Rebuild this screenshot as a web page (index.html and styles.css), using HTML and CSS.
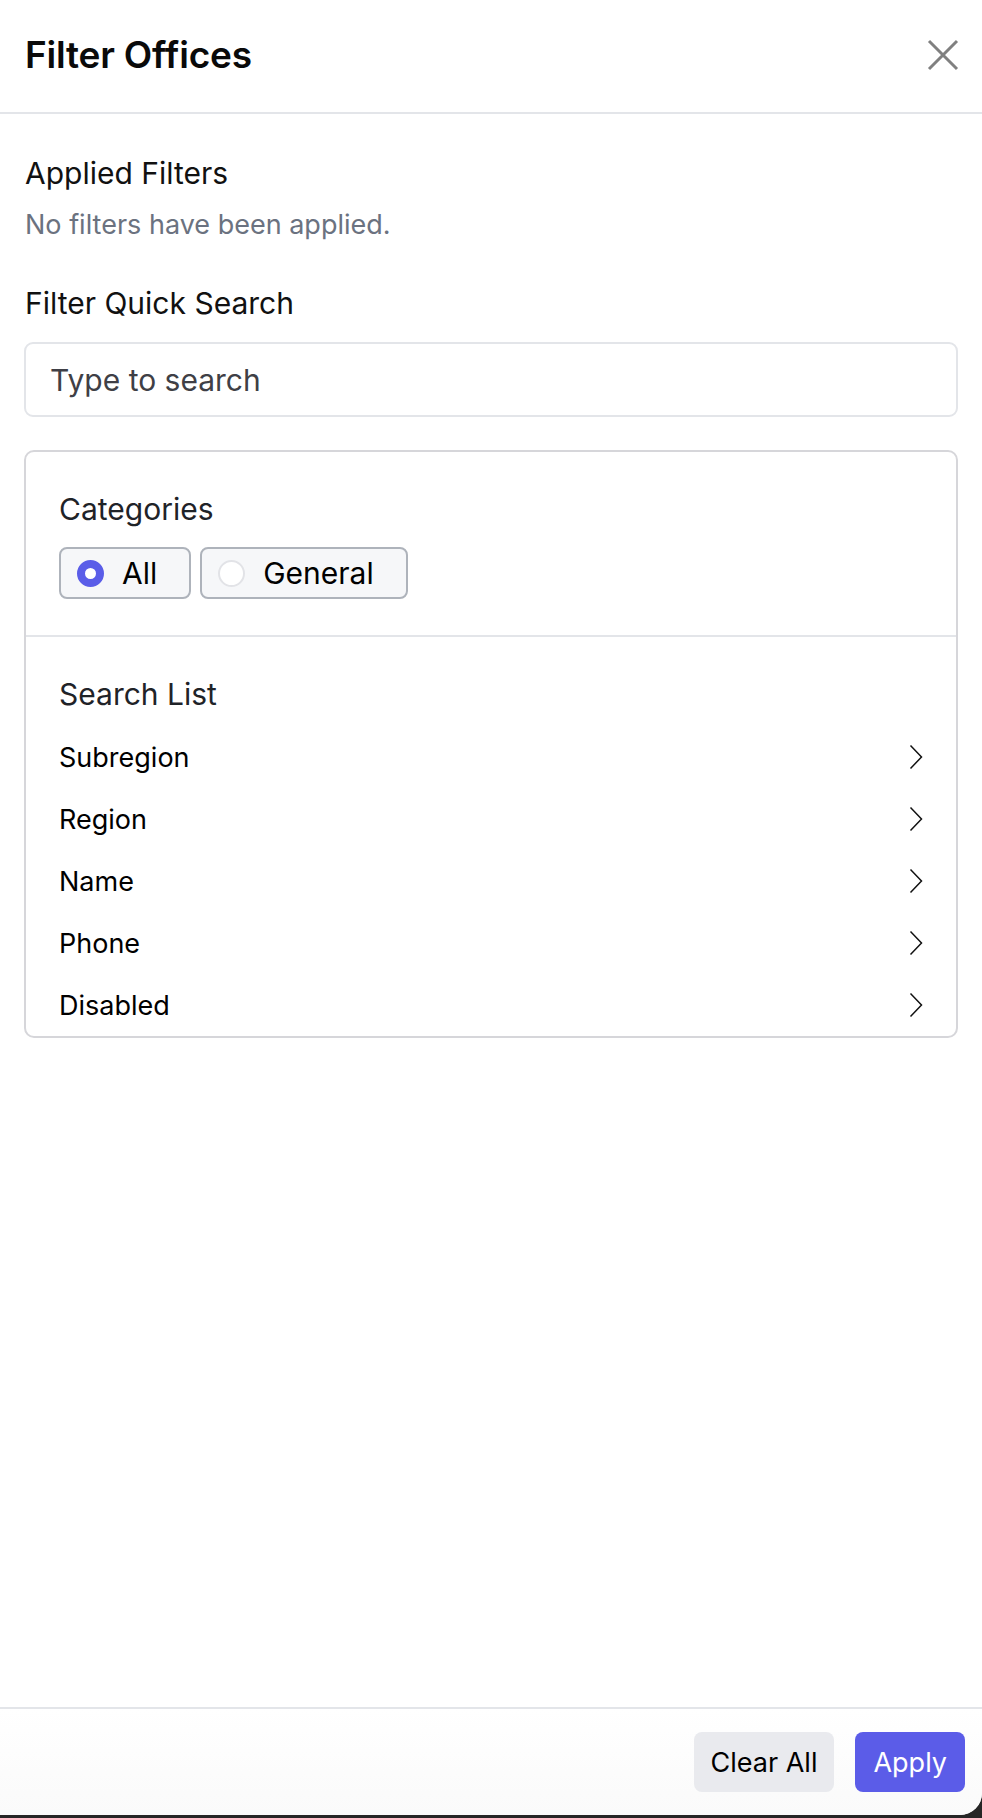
FILE: index.html
```html
<!DOCTYPE html>
<html lang="en">
<head>
<meta charset="utf-8">
<title>Filter Offices</title>
<link rel="stylesheet" href="styles.css">
</head>
<body>
<div class="panel">
  <header class="hdr">
    <h1 class="title">Filter Offices</h1>
    <button class="close" aria-label="Close">
      <svg width="32" height="32" viewBox="0 0 32 32"><path d="M2 2 L30 30 M30 2 L2 30" stroke="#808080" stroke-width="3" fill="none"/></svg>
    </button>
  </header>
  <main class="content">
    <section class="applied">
      <h2 class="sec-title">Applied Filters</h2>
      <p class="muted">No filters have been applied.</p>
    </section>
    <section class="quick">
      <h2 class="sec-title">Filter Quick Search</h2>
      <div class="search">Type to search</div>
    </section>
    <div class="card">
      <div class="cats">
        <h3 class="card-title">Categories</h3>
        <div class="radios">
          <label class="radio"><span class="dot on"></span><span>All</span></label>
          <label class="radio"><span class="dot"></span><span>General</span></label>
        </div>
      </div>
      <div class="list">
        <h3 class="card-title">Search List</h3>
        <ul class="items">
          <li class="item"><span>Subregion</span><svg class="chev" width="16" height="26" viewBox="0 0 16 26"><path d="M2.5 1.5 L13.5 13 L2.5 24.5" stroke="#111" stroke-width="1.5" fill="none"/></svg></li>
          <li class="item"><span>Region</span><svg class="chev" width="16" height="26" viewBox="0 0 16 26"><path d="M2.5 1.5 L13.5 13 L2.5 24.5" stroke="#111" stroke-width="1.5" fill="none"/></svg></li>
          <li class="item"><span>Name</span><svg class="chev" width="16" height="26" viewBox="0 0 16 26"><path d="M2.5 1.5 L13.5 13 L2.5 24.5" stroke="#111" stroke-width="1.5" fill="none"/></svg></li>
          <li class="item"><span>Phone</span><svg class="chev" width="16" height="26" viewBox="0 0 16 26"><path d="M2.5 1.5 L13.5 13 L2.5 24.5" stroke="#111" stroke-width="1.5" fill="none"/></svg></li>
          <li class="item"><span>Disabled</span><svg class="chev" width="16" height="26" viewBox="0 0 16 26"><path d="M2.5 1.5 L13.5 13 L2.5 24.5" stroke="#111" stroke-width="1.5" fill="none"/></svg></li>
        </ul>
      </div>
    </div>
  </main>
  <footer class="ftr">
    <button class="btn btn-clear">Clear All</button>
    <button class="btn btn-apply">Apply</button>
  </footer>
</div>
</body>
</html>
```
FILE: styles.css
```css
* { box-sizing: border-box; }
html, body { margin: 0; padding: 0; }
body {
  background: #262626;
  font-family: Inter, "Noto Sans", "Liberation Sans", sans-serif;
  color: #111;
  height: 1818px;
}
.panel {
  width: 982px;
  height: 1815px;
  background: #fff;
  display: flex;
  flex-direction: column;
  border-bottom-right-radius: 22px;
  overflow: hidden;
}
.hdr {
  height: 114px;
  flex: none;
  border-bottom: 2px solid #e3e5e9;
  display: flex;
  align-items: center;
  justify-content: space-between;
  padding: 0 23px 2px 25px;
}
.title {
  margin: 0;
  font-size: 37px;
  font-weight: 600;
  line-height: 48px;
  color: #0a0a0a;
  letter-spacing: -0.2px;
}
.close {
  border: 0;
  background: none;
  padding: 0;
  width: 32px;
  height: 32px;
  display: flex;
}
.content {
  flex: 1;
  padding: 39px 24px 0 24px;
}
.sec-title {
  margin: 0;
  font-size: 30px;
  font-weight: 400;
  line-height: 40px;
  color: #111;
  padding-left: 1px;
}
.muted {
  margin: 14px 0 0 0;
  font-size: 27px;
  line-height: 36px;
  color: #6b7280;
  padding-left: 1px;
}
.quick { margin-top: 40px; }
.search {
  margin-top: 19px;
  height: 75px;
  border: 2px solid #e3e5e9;
  border-radius: 9px;
  padding-left: 24px;
  display: flex;
  align-items: center;
  font-size: 30px;
  color: #3f3f46;
}
.card {
  margin-top: 33px;
  border: 2px solid #d6d6da;
  border-radius: 10px;
}
.cats {
  padding: 37px 33px 36px 33px;
  border-bottom: 2px solid #e3e5e9;
}
.card-title {
  margin: 0;
  font-size: 30px;
  font-weight: 400;
  line-height: 40px;
  color: #1f2328;
}
.radios {
  margin-top: 18px;
  display: flex;
  gap: 9px;
}
.radio {
  height: 52px;
  display: flex;
  align-items: center;
  gap: 18px;
  padding: 0 32px 0 16px;
  background: #f6f7f9;
  border: 2px solid #aeb3bb;
  border-radius: 8px;
  font-size: 30px;
  color: #000;
}
.dot {
  width: 27px;
  height: 27px;
  border-radius: 50%;
  border: 2px solid #e2e3e7;
  background: #fff;
  flex: none;
}
.dot.on {
  border: 8px solid #5a5de8;
  background: #fff;
}
.list {
  padding: 37px 32px 0 33px;
}
.items {
  list-style: none;
  margin: 12px 0 0 0;
  padding: 0;
}
.item {
  height: 62px;
  display: flex;
  align-items: center;
  justify-content: space-between;
  font-size: 27px;
  color: #000;
}
.chev { flex: none; }
.ftr {
  flex: none;
  border-top: 2px solid #e3e5e9;
  background: linear-gradient(#ffffff, #fafafa);
  display: flex;
  justify-content: flex-end;
  gap: 21px;
  padding: 23px 17px 23px 0;
}
.btn {
  height: 60px;
  border: 0;
  border-radius: 8px;
  font-family: inherit;
  font-size: 27px;
  padding: 0 17px;
  white-space: nowrap;
}
.btn-clear { background: #e9eaee; color: #000; }
.btn-apply { background: #5b5ce8; color: #fff; padding: 0 18px; }
```
